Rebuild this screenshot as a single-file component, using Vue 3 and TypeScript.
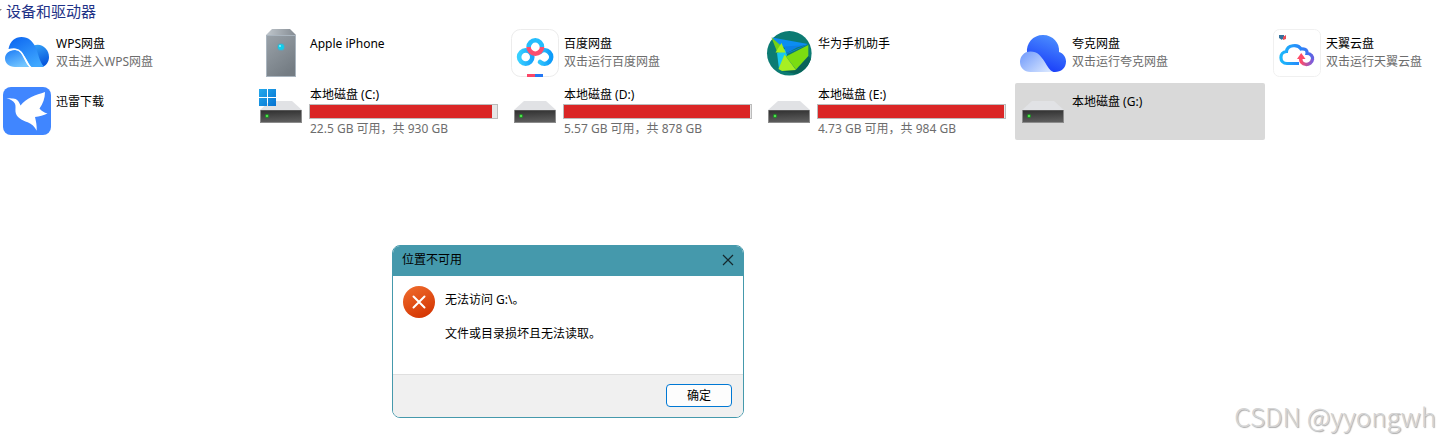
<script setup lang="ts">
import { ref } from 'vue'

type IconName = 'wps' | 'phone' | 'baidu' | 'huawei' | 'quark' | 'tianyi' | 'xunlei' | 'drive' | 'system'

interface Entry {
  icon: IconName
  name: string
  hint?: string
  free?: number
  total?: number
}

const entries: Entry[] = [
  { icon: 'wps', name: 'WPS网盘', hint: '双击进入WPS网盘' },
  { icon: 'phone', name: 'Apple iPhone' },
  { icon: 'baidu', name: '百度网盘', hint: '双击运行百度网盘' },
  { icon: 'huawei', name: '华为手机助手' },
  { icon: 'quark', name: '夸克网盘', hint: '双击运行夸克网盘' },
  { icon: 'tianyi', name: '天翼云盘', hint: '双击运行天翼云盘' },
  { icon: 'xunlei', name: '迅雷下载' },
  { icon: 'system', name: '本地磁盘 (C:)', free: 22.5, total: 930 },
  { icon: 'drive', name: '本地磁盘 (D:)', free: 5.57, total: 878 },
  { icon: 'drive', name: '本地磁盘 (E:)', free: 4.73, total: 984 },
  { icon: 'drive', name: '本地磁盘 (G:)' },
]

const selected = ref(10)
const dialogOpen = ref(true)

function usedPercent(e: Entry): number {
  return e.total ? (1 - (e.free ?? 0) / e.total) * 100 : 0
}
</script>

<template>
  <main class="explorer">
    <h2 class="group">
      <svg class="chevron" viewBox="0 0 8 8" aria-hidden="true"><path d="M0 2h8L4 6z" fill="#8a8a8a" /></svg>
      设备和驱动器
    </h2>
    <ul class="grid">
      <li
        v-for="(e, i) in entries"
        :key="e.name"
        class="tile"
        :class="{ selected: i === selected, disk: e.total }"
        @click="selected = i"
      >
        <svg v-if="e.icon === 'wps'" class="icon" viewBox="0 0 48 48" aria-hidden="true">
          <defs>
            <linearGradient id="wpsTop" x1="0" y1="0" x2="0.7" y2="1"><stop offset="0" stop-color="#0a63f0" /><stop offset="1" stop-color="#3fa8ff" /></linearGradient>
            <linearGradient id="wpsRight" x1="0" y1="0" x2="0.3" y2="1"><stop offset="0" stop-color="#36a4f8" /><stop offset="1" stop-color="#0757dc" /></linearGradient>
            <linearGradient id="wpsLow" x1="0" y1="0" x2="0.6" y2="1"><stop offset="0" stop-color="#1c7cf6" /><stop offset="1" stop-color="#74c6ff" /></linearGradient>
          </defs>
          <path d="M30 17c8-4 16 3 16 11 0 5-3 9-7 10-6-4-8-12-9-21z" fill="url(#wpsRight)" />
          <path d="M5.500 20C7 12 12 8 18.500 8c7 0 11 4 14 10 3 7 4 15 8.500 19.500-2 0.700-5 0.500-13 0.500C24 33 20 17 5.500 20z" fill="url(#wpsTop)" />
          <path d="M12 21c9 0 9 13 15 17H12C6 38 2 34 2 29.500S6 21 12 21z" fill="url(#wpsLow)" />
          <path d="M3 23c3-2.500 6-3.200 9.500-2.800C21 21 21 33 28 38.500" fill="none" stroke="#fff" stroke-width="1.500" />
        </svg>

        <svg v-else-if="e.icon === 'phone'" class="icon" viewBox="0 0 48 48" aria-hidden="true">
          <defs>
            <linearGradient id="tower" x1="0" y1="0" x2="0.6" y2="1"><stop offset="0" stop-color="#9aa2a9" /><stop offset="1" stop-color="#747c83" /></linearGradient>
            <linearGradient id="towerTop" x1="0" y1="0" x2="1" y2="0"><stop offset="0" stop-color="#c0c7cd" /><stop offset="1" stop-color="#848b92" /></linearGradient>
          </defs>
          <path d="M15 0h18l6 6H9z" fill="url(#towerTop)" />
          <rect x="9.500" y="6.500" width="29" height="41" fill="url(#tower)" stroke="#aab5bf" />
          <circle cx="24" cy="18" r="4" fill="#6c9caf" />
          <circle cx="24" cy="18" r="3" fill="#12cdea" />
          <circle cx="23" cy="17" r="1" fill="#8ff3ff" />
        </svg>

        <svg v-else-if="e.icon === 'baidu'" class="icon" viewBox="0 0 48 48" aria-hidden="true">
          <defs>
            <linearGradient id="bdLeft" x1="0" y1="0" x2="1" y2="0"><stop offset="0" stop-color="#37d0ff" /><stop offset="1" stop-color="#19a4fb" /></linearGradient>
            <linearGradient id="bdRight" x1="0" y1="0" x2="1" y2="0"><stop offset="0" stop-color="#30c4fc" /><stop offset="1" stop-color="#0c9bfa" /></linearGradient>
          </defs>
          <rect x="0.500" y="0.500" width="47" height="47" rx="9" fill="#fff" stroke="#ececec" />
          <g fill="none" stroke-width="4.600" stroke-linecap="round">
            <circle cx="14.700" cy="28" r="6.600" stroke="url(#bdLeft)" />
            <path d="M29 33a6.700 6.700 0 1 0 0-10" stroke="url(#bdRight)" />
            <path d="M17.600 18a6.700 6.700 0 1 1 13.400 0" stroke="#25bdfd" stroke-linecap="butt" />
            <path d="M17.600 18a6.700 6.700 0 0 0 13.400 0" stroke="#fb4f70" stroke-linecap="butt" />
          </g>
          <path d="M16 45h8v3h-8z" fill="#fb4668" />
          <path d="M24 45h8v3h-8z" fill="#2478f4" />
        </svg>

        <svg v-else-if="e.icon === 'huawei'" class="icon" viewBox="0 0 48 48" aria-hidden="true">
          <circle cx="24.300" cy="24.300" r="22.300" fill="#0c7b73" />
          <path d="M31 40L43.500 27 46 30c-3 8-8 13-15 15l-14-3z" fill="#096359" />
          <path d="M7 8.500l36 6.500-15 7-14-6z" fill="#0c8df2" />
          <path d="M19 17.500l23-1.500-20 9z" fill="#0b7fe4" />
          <path d="M20 25l22-9.500-10 3z" fill="#0c7b73" />
          <path d="M12 24l8-4 2 6-8 14z" fill="#19c7ee" />
          <path d="M6.300 8.300L17.500 18 12 22.500z" fill="#76cf17" />
          <path d="M10.500 23.500l6-9.500 4 9.500z" fill="#a4ef1d" />
          <path d="M43.300 16v11L31 40.500 21 27.500z" fill="#7bdc11" />
          <path d="M19.500 25.500L31 41l-14 1-3.500-2z" fill="#a6ef22" />
        </svg>

        <svg v-else-if="e.icon === 'quark'" class="icon" viewBox="0 0 48 48" aria-hidden="true">
          <defs>
            <linearGradient id="qkTop" x1="0.800" y1="0" x2="0.400" y2="1"><stop offset="0" stop-color="#4f94ff" /><stop offset="1" stop-color="#1638f8" /></linearGradient>
            <linearGradient id="qkLow" x1="0" y1="0.100" x2="1" y2="0.800"><stop offset="0" stop-color="#739cfb" /><stop offset="1" stop-color="#d8e6ff" /></linearGradient>
          </defs>
          <path d="M8 24C7 14 14 6 24 6s17 8 16 17c4 1 7 5 7 9.500C47 39 42 43 36 43H20z" fill="url(#qkTop)" />
          <path d="M11.500 22.500c7 0 10 4 14 10 3 5 5 9 9 10.500h-23C5 43 1 38.500 1 33s4-10.500 10.500-10.500z" fill="url(#qkLow)" />
        </svg>

        <svg v-else-if="e.icon === 'tianyi'" class="icon" viewBox="0 0 48 48" aria-hidden="true">
          <defs>
            <linearGradient id="tyCloud" x1="0" y1="0" x2="1" y2="0"><stop offset="0" stop-color="#1bb8fb" /><stop offset="0.600" stop-color="#2887fa" /><stop offset="0.850" stop-color="#3f74f0" /><stop offset="1" stop-color="#6560e0" /></linearGradient>
            <linearGradient id="tyHook" x1="0" y1="0" x2="1" y2="0"><stop offset="0" stop-color="#ff4b68" /><stop offset="1" stop-color="#7a5cdc" /></linearGradient>
          </defs>
          <rect x="0.500" y="0.500" width="47" height="47" rx="6" fill="#fff" stroke="#f0f0f0" />
          <path d="M26 34.500H14C6 34.500 6 23 13.500 22.500 14 16 25 14.500 28 20c5-1 6.500 2 6 4.500 4 0 6 3 5.500 6" fill="none" stroke="url(#tyCloud)" stroke-width="3.200" />
          <path d="M28 28c-2 10 11 9 11.500 2" fill="none" stroke="url(#tyHook)" stroke-width="3.500" />
          <path d="M24 30l4.200-6 4.300 6z" fill="#ff4b68" />
          <path d="M6 6h3l1 3-1 2-3-2zM9 6h2v4H9z" fill="#35719c" />
          <path d="M10 8l3-2v4l-3 1z" fill="#e84d58" />
        </svg>

        <svg v-else-if="e.icon === 'xunlei'" class="icon" viewBox="0 0 48 48" aria-hidden="true">
          <rect width="48" height="48" rx="8" fill="#4086ff" />
          <path d="M3.500 11.300c3 0 5 0.200 6.500 0.200 4 0 6 3 7.500 7C23 11 33 8 42 5c0 6-2 12-5.500 16.500 2 2.500 4.500 4 8 5-4 2-8 3-12.500 3.500 1 4 2 9 1.700 13.700-2-4-5-7-9-8.500-6-2-11.500-5-12.200-10.500-0.300-3 0.500-5-0.500-8-1.500-3-5-4.500-8.500-5.400z" fill="#fff" />
        </svg>

        <svg v-else class="icon" viewBox="0 0 48 48" aria-hidden="true">
          <defs>
            <linearGradient id="diskFront" x1="0" y1="0" x2="0.150" y2="1"><stop offset="0" stop-color="#303030" /><stop offset="1" stop-color="#5d5d5d" /></linearGradient>
            <linearGradient id="winPane" x1="0" y1="0" x2="1" y2="1"><stop offset="0" stop-color="#24a9ec" /><stop offset="1" stop-color="#0673d2" /></linearGradient>
          </defs>
          <path d="M13 14h22l10 9H3z" fill="#e1e2e5" />
          <rect x="3.500" y="23.500" width="41" height="12" fill="url(#diskFront)" stroke="#8c8c8c" />
          <path d="M4 23.500h40" stroke="#555" />
          <circle cx="10" cy="29" r="2" fill="#1d9a24" />
          <circle cx="10" cy="29" r="1" fill="#63f25b" />
          <path v-if="e.icon === 'system'" d="M2 2h8v8H2zM11 2h8v8h-8zM2 11h8v8H2zM11 11h8v8h-8z" fill="url(#winPane)" />
        </svg>

        <div class="info">
          <span class="name">{{ e.name }}</span>
          <template v-if="e.total">
            <div class="bar" role="progressbar" :aria-label="e.name" :aria-valuenow="Math.round(usedPercent(e))">
              <div class="fill" :style="{ width: usedPercent(e) + '%' }"></div>
            </div>
            <span class="hint">{{ e.free }} GB 可用，共 {{ e.total }} GB</span>
          </template>
          <span v-else-if="e.hint" class="hint">{{ e.hint }}</span>
        </div>
      </li>
    </ul>

    <section v-if="dialogOpen" class="dialog" role="alertdialog" aria-labelledby="dialog-title" aria-describedby="dialog-text">
      <header class="titlebar">
        <h1 id="dialog-title">位置不可用</h1>
        <button class="close" type="button" aria-label="关闭" @click="dialogOpen = false">
          <svg viewBox="0 0 10 10" aria-hidden="true"><path d="M0 0l10 10M10 0L0 10" stroke="#14282d" stroke-width="1.200" fill="none" /></svg>
        </button>
      </header>
      <div class="content">
        <svg class="error" viewBox="0 0 32 32" aria-hidden="true">
          <defs>
            <linearGradient id="err" x1="0.200" y1="0" x2="0.700" y2="1"><stop offset="0" stop-color="#ee6a2b" /><stop offset="1" stop-color="#d43502" /></linearGradient>
          </defs>
          <circle cx="16" cy="16" r="16" fill="url(#err)" />
          <path d="M10.500 10.500l11 11M21.500 10.500l-11 11" stroke="#fff" stroke-width="2" stroke-linecap="round" fill="none" />
        </svg>
        <div id="dialog-text" class="message">
          <p>无法访问 G:\。</p>
          <p>文件或目录损坏且无法读取。</p>
        </div>
      </div>
      <footer class="actions">
        <button class="ok" type="button" @click="dialogOpen = false">确定</button>
      </footer>
    </section>

    <div class="watermark">CSDN @yyongwh</div>
  </main>
</template>

<style>
body {
  margin: 0;
  background: #fff;
}
</style>

<style scoped>
.explorer {
  position: relative;
  box-sizing: border-box;
  min-height: 100vh;
  overflow: hidden;
  font: 12px/18px "Noto Sans", "Noto Sans CJK SC", sans-serif;
  color: #000;
}

.group {
  display: flex;
  align-items: center;
  gap: 4px;
  height: 25px;
  margin: 0 0 0 -6px;
  padding-bottom: 4px;
  box-sizing: border-box;
  font-size: 15px;
  font-weight: 400;
  color: #1e3287;
}

.chevron {
  width: 8px;
  height: 8px;
}

.grid {
  display: grid;
  grid-template-columns: repeat(6, minmax(250px, 1fr));
  gap: 1px 4px;
  margin: 0 0 0 -1px;
  padding: 0;
  list-style: none;
}

.tile {
  display: flex;
  gap: 4px;
  box-sizing: border-box;
  height: 57px;
  padding: 4px;
  border-radius: 2px;
}

.tile.selected {
  background: #d9d9d9;
}

.icon {
  flex: none;
  width: 48px;
  height: 48px;
}

.info {
  flex: 1;
  padding-top: 6px;
  white-space: nowrap;
}

.disk .info {
  margin-top: -1px;
  padding-top: 0;
}

.name,
.hint {
  display: block;
  height: 18px;
  padding-left: 1px;
}

.hint {
  color: #6d6d6d;
}

.bar {
  box-sizing: border-box;
  height: 15px;
  margin: 0 1px 1px 0;
  border: 1px solid #bcbcbc;
  background: #e6e6e6;
}

.fill {
  height: 100%;
  background: #da2626;
}

.dialog {
  position: absolute;
  top: 245px;
  left: 392px;
  box-sizing: border-box;
  width: 352px;
  overflow: hidden;
  border: 1px solid #4599ac;
  border-radius: 8px;
  background: #fff;
}

.titlebar {
  display: flex;
  align-items: center;
  justify-content: space-between;
  box-sizing: border-box;
  height: 30px;
  padding: 0 10px 2px 9px;
  background: #4599ac;
}

.titlebar h1 {
  margin: 0;
  font-size: 12px;
  font-weight: 400;
}

.close {
  display: flex;
  padding: 0;
  border: 0;
  background: none;
}

.close svg {
  width: 10px;
  height: 10px;
  overflow: visible;
}

.content {
  display: flex;
  gap: 10px;
  box-sizing: border-box;
  min-height: 98px;
  padding: 10px;
}

.error {
  width: 32px;
  height: 32px;
}

.message {
  display: flex;
  flex-direction: column;
  gap: 16px;
  padding-top: 5px;
}

.message p {
  margin: 0;
}

.actions {
  display: flex;
  justify-content: flex-end;
  padding: 9px 11px 10px;
  border-top: 1px solid #dfdfdf;
  background: #f0f0f0;
}

.ok {
  width: 66px;
  height: 23px;
  padding: 0;
  border: 1px solid #0078d4;
  border-radius: 4px;
  background: #fdfdfd;
  font: inherit;
  color: #000;
}

.watermark {
  position: absolute;
  right: 4px;
  bottom: 8px;
  font: 300 26px/38px "Noto Sans CJK SC", sans-serif;
  color: #d4d4d4;
  text-shadow: 1px 1px 1px #aaa;
}
</style>
